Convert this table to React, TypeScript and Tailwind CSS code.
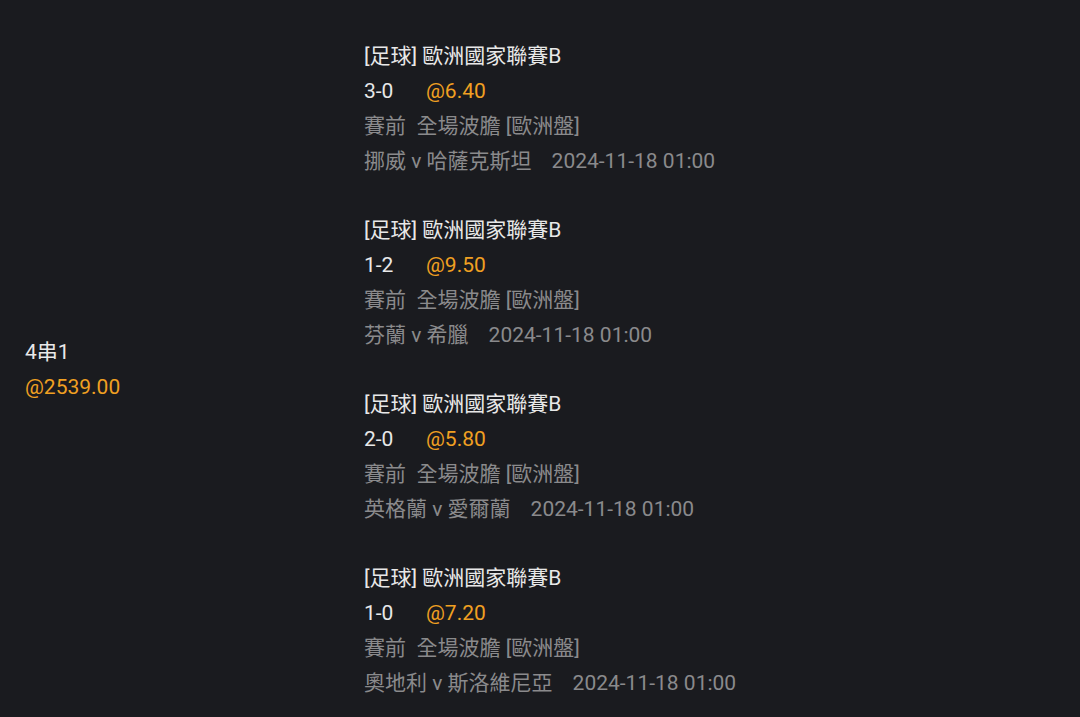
import React from 'react';

interface Leg {
    score: string;
    odds: string;
    teams: string;
}

const legs: Leg[] = [
    { score: '3-0', odds: '@6.40', teams: '挪威 v 哈薩克斯坦' },
    { score: '1-2', odds: '@9.50', teams: '芬蘭 v 希臘' },
    { score: '2-0', odds: '@5.80', teams: '英格蘭 v 愛爾蘭' },
    { score: '1-0', odds: '@7.20', teams: '奧地利 v 斯洛維尼亞' },
];

const App: React.FC = () => {
    return (
        <div
            className="w-[1080px] h-[717px] overflow-hidden bg-[#1a1b1f] text-[21px] leading-[35px]"
            style={{ fontFamily: 'Roboto, "Noto Sans CJK TC", sans-serif' }}
        >
            <div className="flex items-center pt-[39px]">
                {/* Combo summary */}
                <div className="w-[364px] pl-[25px]">
                    <div className="text-[#e8e8e8]">4串1</div>
                    <div className="text-[#f0a022]">@2539.00</div>
                </div>

                {/* Legs */}
                <div className="flex flex-col gap-[34px]">
                    {legs.map((leg, i) => (
                        <div key={i}>
                            <div className="text-[#e8e8e8]">[足球] 歐洲國家聯賽B</div>
                            <div className="flex">
                                <span className="w-[62px] text-[#e8e8e8]">{leg.score}</span>
                                <span className="text-[#f0a022]">{leg.odds}</span>
                            </div>
                            <div className="text-[#8a8a8c]">賽前&nbsp;&nbsp;全場波膽 [歐洲盤]</div>
                            <div className="flex gap-[20px] text-[#8a8a8c]">
                                <span>{leg.teams}</span>
                                <span>2024-11-18 01:00</span>
                            </div>
                        </div>
                    ))}
                </div>
            </div>
        </div>
    );
};

export default App;
